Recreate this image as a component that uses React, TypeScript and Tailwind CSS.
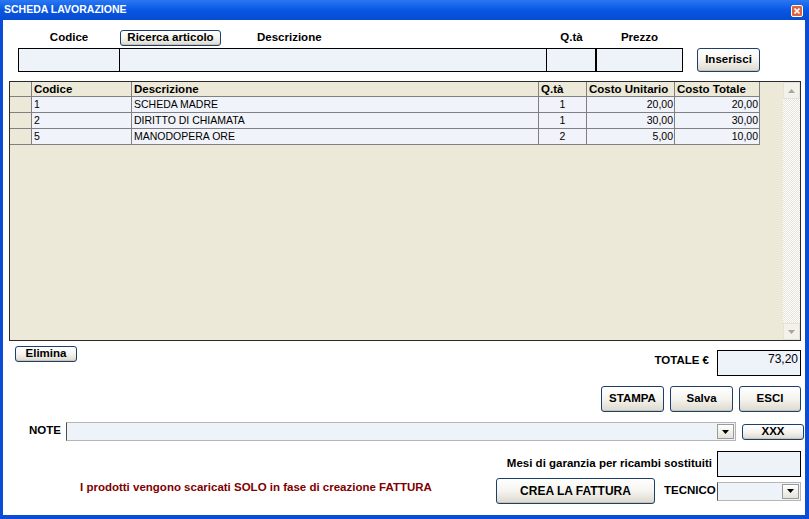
import React from 'react';

const rows = [
  { code: '1', desc: 'SCHEDA MADRE', qty: '1', unit: '20,00', total: '20,00' },
  { code: '2', desc: 'DIRITTO DI CHIAMATA', qty: '1', unit: '30,00', total: '30,00' },
  { code: '5', desc: 'MANODOPERA ORE', qty: '2', unit: '5,00', total: '10,00' },
];

const XpButton = ({ children, className = '' }: { children: React.ReactNode; className?: string }) => (
  <button
    className={`flex items-center justify-center rounded-[3px] border border-[#1c3f6e] bg-gradient-to-b from-white via-[#f5f4ef] to-[#dcd9cc] text-[11.5px] font-bold leading-none text-black shadow-[inset_0_-1px_0_#c9c5b5] ${className}`}
  >
    {children}
  </button>
);

const DropArrow = ({ className = '' }: { className?: string }) => (
  <div className={`flex w-[17px] items-center justify-center border border-[#9a9a9a] bg-gradient-to-b from-white to-[#e6e3d8] ${className}`}>
    <svg width="7" height="4" viewBox="0 0 7 4">
      <path d="M0 0h7L3.5 4z" fill="#000" />
    </svg>
  </div>
);

const ScrollArrow = ({ up }: { up?: boolean }) => (
  <div className="flex h-[17px] w-[17px] items-center justify-center border border-[#e4e1d6] bg-[#f2f1ea]">
    <svg width="7" height="4" viewBox="0 0 7 4">
      <path d={up ? 'M0 4h7L3.5 0z' : 'M0 0h7L3.5 4z'} fill="#a9a79c" />
    </svg>
  </div>
);

export default function App() {
  return (
    <div className="h-[519px] w-[809px] overflow-hidden font-['Liberation_Sans',Arial,sans-serif] text-black">
      {/* Title bar */}
      <div className="flex h-[20px] items-center justify-between bg-gradient-to-b from-[#2a78f2] via-[#0856e4] to-[#064cd2] pl-[4px] pr-[6px]">
        <span className="text-[10.5px] font-bold text-white">SCHEDA LAVORAZIONE</span>
        <div className="mt-[2px] flex h-[12px] w-[12px] items-center justify-center rounded-[2px] border border-white bg-[#e0633d]">
          <svg width="6" height="6" viewBox="0 0 6 6">
            <path d="M0.5 0.5l5 5M5.5 0.5l-5 5" stroke="#fff" strokeWidth="1.6" />
          </svg>
        </div>
      </div>

      <div className="flex h-[499px] flex-col border-x-[3px] border-b-[4px] border-r-[4px] border-[#0a4bd8] bg-white">
        {/* Labels */}
        <div className="mt-[10px] flex h-[15px] items-center pl-[15px] text-[11.5px] font-bold">
          <div className="w-[102px] text-center">Codice</div>
          <div className="flex w-[427px] items-center">
            <XpButton className="h-[16px] w-[101px]">Ricerca articolo</XpButton>
            <span className="ml-[36px]">Descrizione</span>
          </div>
          <div className="w-[49px] text-center">Q.tà</div>
          <div className="w-[87px] text-center">Prezzo</div>
        </div>

        {/* Inputs */}
        <div className="mt-[3px] flex h-[24px] pl-[15px]">
          <div className="w-[102px] border border-black bg-[#eef2f9]" />
          <div className="-ml-px w-[428px] border border-black bg-[#eef2f9]" />
          <div className="-ml-px w-[50px] border border-black bg-[#eef2f9]" />
          <div className="-ml-px w-[88px] border border-l-2 border-black bg-[#eef2f9]" />
          <XpButton className="ml-[14px] h-[24px] w-[63px]">Inserisci</XpButton>
        </div>

        {/* Grid */}
        <div className="ml-[6px] mt-[9px] flex h-[260px] w-[792px] border border-[#2a2a2a] bg-[#ece9d8]">
          <div className="flex-1 text-[10.5px]">
            <div className="flex h-[15px] text-[11.5px] font-bold leading-[14px]">
              <div className="w-[22px] border-b border-r border-[#808080]" />
              <div className="w-[100px] border-b border-r border-[#808080] pl-[2px]">Codice</div>
              <div className="w-[407px] border-b border-r border-[#808080] pl-[2px]">Descrizione</div>
              <div className="w-[48px] border-b border-r border-[#808080] pl-[2px]">Q.tà</div>
              <div className="w-[88px] border-b border-r border-[#808080] pl-[2px]">Costo Unitario</div>
              <div className="w-[85px] border-b border-r border-[#808080] pl-[2px]">Costo Totale</div>
            </div>
            {rows.map((r) => (
              <div key={r.code} className="flex h-[16px] leading-[15px]">
                <div className="w-[22px] border-b border-r border-[#808080]" />
                <div className="w-[100px] border-b border-r border-[#808080] bg-[#f0f3f9] pl-[2px]">{r.code}</div>
                <div className="w-[407px] border-b border-r border-[#808080] bg-[#f0f3f9] pl-[2px]">{r.desc}</div>
                <div className="w-[48px] border-b border-r border-[#808080] bg-[#f0f3f9] text-center">{r.qty}</div>
                <div className="w-[88px] border-b border-r border-[#808080] bg-[#f0f3f9] pr-[1px] text-right">{r.unit}</div>
                <div className="w-[85px] border-b border-r border-[#808080] bg-[#f0f3f9] pr-[1px] text-right">{r.total}</div>
              </div>
            ))}
          </div>
          <div className="flex w-[17px] flex-col bg-[repeating-conic-gradient(#ffffff_0%_25%,#e6e3d8_0%_50%)] bg-[length:2px_2px]">
            <ScrollArrow up />
            <div className="flex-1" />
            <ScrollArrow />
          </div>
        </div>

        {/* Elimina / Totale */}
        <div className="mt-[5px] flex items-start justify-between">
          <XpButton className="ml-[12px] h-[16px] w-[62px]">Elimina</XpButton>
          <div className="mr-[4px] mt-[4px] flex items-start gap-[8px]">
            <span className="mt-[4px] text-[11.5px] font-bold leading-[13px]">TOTALE €</span>
            <div className="h-[26px] w-[84px] border border-black bg-[#eef2f9] pr-[2px] pt-[1px] text-right text-[12px] leading-[14px]">
              73,20
            </div>
          </div>
        </div>

        {/* Action buttons */}
        <div className="mr-[4px] mt-[10px] flex justify-end gap-[6px]">
          <XpButton className="h-[26px] w-[63px]">STAMPA</XpButton>
          <XpButton className="h-[26px] w-[63px]">Salva</XpButton>
          <XpButton className="h-[26px] w-[62px]">ESCI</XpButton>
        </div>

        {/* Note */}
        <div className="mt-[10px] flex h-[19px] items-center pl-[26px]">
          <span className="mb-[1px] w-[37px] text-[11.5px] font-bold">NOTE</span>
          <div className="flex h-[19px] w-[670px] justify-end border border-[#b5b5b5] border-l-[#505050] bg-[#eef2f9]">
            <DropArrow className="my-[1px] mr-[1px]" />
          </div>
          <XpButton className="ml-[6px] h-[16px] w-[62px]">XXX</XpButton>
        </div>

        {/* Garanzia */}
        <div className="mr-[4px] mt-[10px] flex items-center justify-end gap-[5px]">
          <span className="text-[11.5px] font-bold">Mesi di garanzia per ricambi sostituiti</span>
          <div className="h-[26px] w-[84px] border border-black bg-[#eef2f9]" />
        </div>

        {/* Footer */}
        <div className="mr-[4px] mt-[1px] flex items-center">
          <span className="mb-[7px] ml-[77px] text-[11.5px] font-bold text-[#800000]">
            I prodotti vengono scaricati SOLO in fase di creazione FATTURA
          </span>
          <div className="flex-1" />
          <XpButton className="h-[26px] w-[159px] text-[12px]">CREA LA FATTURA</XpButton>
          <span className="w-[62px] whitespace-nowrap pl-[9px] text-[11.5px] font-bold">TECNICO</span>
          <div className="flex h-[19px] w-[84px] justify-end border border-[#b5b5b5] border-l-[#505050] bg-[#eef2f9]">
            <DropArrow className="my-[1px] mr-[1px]" />
          </div>
        </div>
      </div>
    </div>
  );
}
